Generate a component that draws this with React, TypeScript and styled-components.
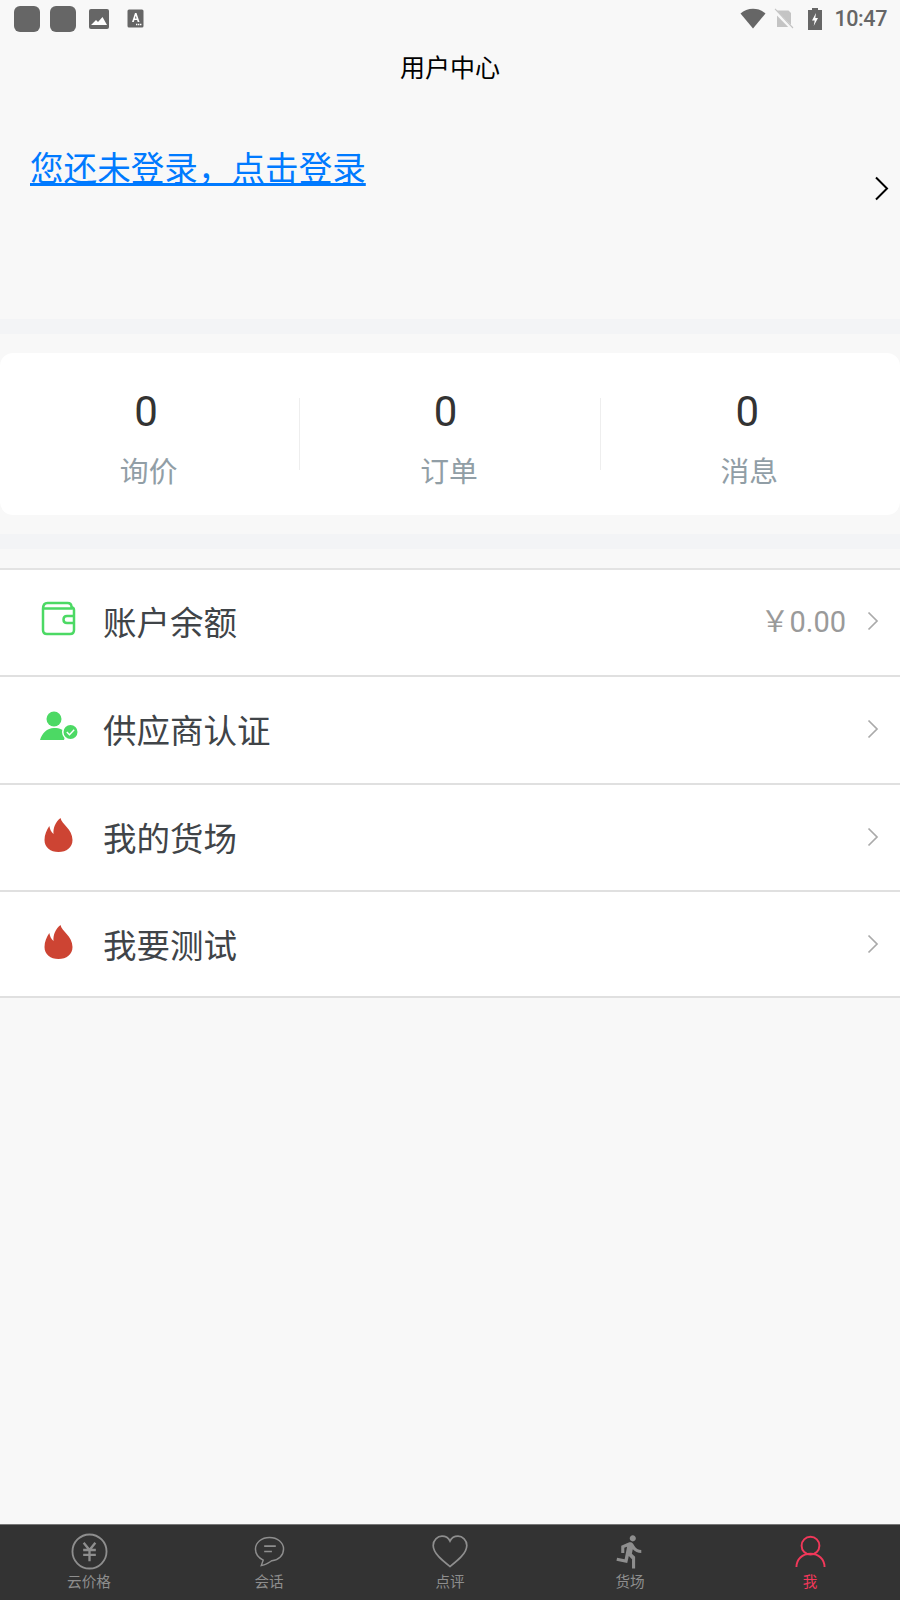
import React from "react";
import styled, { createGlobalStyle } from "styled-components";
import { MdDirectionsRun } from "react-icons/md";

const Global = createGlobalStyle`
  html, body { margin: 0; padding: 0; background: #f8f8f8; }
  * { box-sizing: border-box; }
  body { font-family: Roboto, "Noto Sans CJK SC", sans-serif; }
`;

const Page = styled.div`
  width: 900px;
  height: 1600px;
  display: flex;
  flex-direction: column;
  background: #f8f8f8;
  overflow: hidden;
`;

const StatusBar = styled.div`
  height: 37px;
  flex: none;
  display: flex;
  align-items: center;
  justify-content: space-between;
  padding: 0 13px 0 14px;
`;
const StatusGroup = styled.div`
  display: flex;
  align-items: center;
`;
const AppSquare = styled.div`
  width: 26px;
  height: 26px;
  border-radius: 6px;
  background: #666;
  margin-right: 10px;
`;
const Clock = styled.span`
  font: 500 21.5px/1 Roboto, sans-serif;
  letter-spacing: -0.4px;
  color: #666;
  margin-left: 12px;
`;

const Title = styled.div`
  height: 59px;
  flex: none;
  display: flex;
  align-items: center;
  justify-content: center;
  font: 400 25px/1 "Noto Sans CJK SC", sans-serif;
  color: #000;
`;

const LoginArea = styled.div`
  height: 223px;
  flex: none;
  position: relative;
  padding: 47px 0 0 30px;
`;
const LoginLink = styled.a`
  font: 400 33.6px/47px "Noto Sans CJK SC", sans-serif;
  color: #007aff;
  text-decoration: underline;
  display: block;
`;
const LoginArrow = styled.svg`
  position: absolute;
  left: 874px;
  top: 80px;
`;

const Band = styled.div`
  height: 15px;
  flex: none;
  background: #f3f4f6;
`;

const StatsCard = styled.div`
  flex: none;
  height: 162px;
  margin: 19px 0;
  background: #fff;
  border-radius: 13px;
  display: flex;
  align-items: center;
`;
const Stat = styled.div<{ $divider?: boolean }>`
  flex: 1;
  height: 72px;
  display: flex;
  flex-direction: column;
  align-items: center;
  justify-content: center;
  border-left: ${(p) => (p.$divider ? "1px solid #eeeeee" : "none")};
`;
const StatNumber = styled.div<{ $shift: number }>`
  font: 400 42px/50px Roboto, sans-serif;
  color: #333;
  margin-top: 8px;
  padding-right: ${(p) => p.$shift}px;
`;
const StatLabel = styled.div`
  font: 400 28.8px/40px "Noto Sans CJK SC", sans-serif;
  color: #919ea6;
  margin-top: 13px;
  padding-right: 2px;
`;

const List = styled.div`
  flex: none;
  margin-top: 19px;
  border-top: 2px solid #e3e3e3;
  background: #fff;
`;
const Row = styled.div<{ $height: number }>`
  height: ${(p) => p.$height}px;
  display: flex;
  align-items: center;
  border-bottom: 2px solid #e0e0e0;
  padding: 0 21px 0 40px;
`;
const RowIcon = styled.div`
  width: 63px;
  height: 40px;
  flex: none;
  display: flex;
  align-items: center;
`;
const RowLabel = styled.div<{ $lift: number }>`
  flex: 1;
  font: 400 33.5px/40px "Noto Sans CJK SC", sans-serif;
  color: #404448;
  margin-top: ${(p) => -p.$lift}px;
`;
const RowValue = styled.div`
  font: 400 29px/40px Roboto, "Noto Sans CJK SC", sans-serif;
  color: #9a9a9a;
  margin-right: 21px;
  margin-top: -2px;
`;
const RowChevron = styled.svg<{ $lift: number }>`
  flex: none;
  margin-top: ${(p) => -p.$lift - 1}px;
`;

const Spacer = styled.div`
  flex: 1;
`;

const TabBar = styled.div`
  height: 76px;
  flex: none;
  background: #333;
  border-top: 1px solid #777;
  display: flex;
`;
const Tab = styled.div<{ $active?: boolean; $nudge?: number }>`
  width: 180px;
  flex: none;
  display: flex;
  flex-direction: column;
  align-items: center;
  padding-right: ${(p) => p.$nudge ?? 0}px;
  color: ${(p) => (p.$active ? "#f2385a" : "#8e8e8e")};
`;
const TabIcon = styled.div<{ $lift?: number }>`
  height: 45px;
  padding-bottom: ${(p) => p.$lift ?? 0}px;
  display: flex;
  align-items: flex-end;
  justify-content: center;
`;
const TabLabel = styled.div`
  font: 400 14.6px/20px "Noto Sans CJK SC", sans-serif;
  margin-top: 1px;
`;

const Flame = () => (
  <svg width="29" height="34" viewBox="0 0 28 34" fill="#cd4433" style={{ marginLeft: 4, marginTop: -5 }}>
    <path d="M16 0C17 6 28 11 28 22C28 29.5 22 34 14 34C6 34 0 29.5 0 22C0 17 2 12 4.8 8C5.5 11 6.5 14 9 16C8.5 10 11 4 16 0Z" />
  </svg>
);

const Wallet = () => (
  <svg width="35" height="35" viewBox="0 0 35 35" fill="none" stroke="#4cd964" strokeWidth="2.5" style={{ marginLeft: 1, marginTop: -8 }}>
    <path d="M2 8V29C2 31.5 3.5 33 6 33H29C31.5 33 33 31.5 33 29V9C33 7.5 32 6.5 30.5 6.3" />
    <path d="M2 8C2 4 3.5 2 6.5 2H26.5C29 2 30.5 3.5 30.5 6V7.5H2" />
    <path d="M33 15H26C23.8 15 22.5 16.6 22.5 18.5C22.5 20.4 23.8 22 26 22H33" />
  </svg>
);

const PersonCheck = () => (
  <svg width="40" height="30" viewBox="0 0 40 30" style={{ marginTop: -8 }}>
    <circle cx="14" cy="8" r="7.5" fill="#4cd964" />
    <path d="M0 29C2 22 7 17 14 17C20 17 24 19 26 22L24 29Z" fill="#4cd964" />
    <circle cx="30.5" cy="21" r="8.5" fill="#fff" />
    <circle cx="30.5" cy="21" r="7" fill="#4cd964" />
    <path d="M26.8 21L29.5 23.8L34.2 18.8" fill="none" stroke="#fff" strokeWidth="1.4" />
  </svg>
);

const rows = [
  { label: "账户余额", icon: <Wallet />, value: "￥0.00", height: 107, lift: 3 },
  { label: "供应商认证", icon: <PersonCheck />, height: 108, lift: 2 },
  { label: "我的货场", icon: <Flame />, height: 107, lift: 1 },
  { label: "我要测试", icon: <Flame />, height: 106, lift: 0 },
];

const stats = [
  { n: "0", label: "询价", shift: 7 },
  { n: "0", label: "订单", shift: 9 },
  { n: "0", label: "消息", shift: 6 },
];

export default function App() {
  return (
    <Page>
      <Global />
      <StatusBar>
        <StatusGroup>
          <AppSquare />
          <AppSquare />
          <svg width="22" height="22" viewBox="0 0 22 22" style={{ marginLeft: 2 }}>
            <rect x="1" y="1" width="20" height="20" rx="2" fill="#666" />
            <path d="M3 17L8 12L10 14L14.5 9L19 17Z" fill="#fff" />
          </svg>
          <svg width="17" height="19" viewBox="0 0 17 19" style={{ marginLeft: 17 }}>
            <rect x="0.5" y="0.5" width="16" height="18" rx="1.5" fill="#666" />
            <path d="M5 13L8 4H9.5L12.5 13H10.7L10.1 11H7.4L6.8 13ZM7.9 9.5H9.6L8.75 6.7Z" fill="#fff" />
            <path d="M9 15.5H15" stroke="#fff" strokeWidth="1.3" strokeDasharray="1.4 0.6" />
          </svg>
        </StatusGroup>
        <StatusGroup>
          <svg width="26" height="21" viewBox="0 0 26 21">
            <path d="M0.5 5.5C7 -0.8 19 -0.8 25.5 5.5L13 20.5Z" fill="#666" />
          </svg>
          <svg width="20" height="22" viewBox="0 0 20 22" style={{ marginLeft: 8 }}>
            <path d="M3 2.5H14.5L17 5V19H3Z" fill="#c4c4c4" />
            <path d="M0 2L19 21.5" stroke="#f8f8f8" strokeWidth="3.4" />
            <path d="M1 0.8L19 20" stroke="#c4c4c4" strokeWidth="1.1" />
          </svg>
          <svg width="14" height="22" viewBox="0 0 14 22" style={{ marginLeft: 14 }}>
            <path d="M4 0H10V2H14V22H0V2H4Z" fill="#666" />
            <path d="M8 5L4 12.5H6.7L5.7 18L10 10H7.3Z" fill="#fff" />
          </svg>
          <Clock>10:47</Clock>
        </StatusGroup>
      </StatusBar>
      <Title>用户中心</Title>
      <LoginArea>
        <LoginLink>您还未登录，点击登录</LoginLink>
        <LoginArrow width="16" height="25" viewBox="0 0 16 25" fill="none" stroke="#000" strokeWidth="2">
          <path d="M2 1.5L13 12.5L2 23.5" />
        </LoginArrow>
      </LoginArea>
      <Band />
      <StatsCard>
        {stats.map((s, i) => (
          <Stat key={s.label} $divider={i > 0}>
            <StatNumber $shift={s.shift}>{s.n}</StatNumber>
            <StatLabel>{s.label}</StatLabel>
          </Stat>
        ))}
      </StatsCard>
      <Band />
      <List>
        {rows.map((r) => (
          <Row key={r.label} $height={r.height}>
            <RowIcon>{r.icon}</RowIcon>
            <RowLabel $lift={r.lift}>{r.label}</RowLabel>
            {r.value && <RowValue>{r.value}</RowValue>}
            <RowChevron $lift={r.lift} width="12" height="20" viewBox="0 0 12 20" fill="none" stroke="#aaa" strokeWidth="1.7">
              <path d="M1.5 1.5L10 10L1.5 18.5" />
            </RowChevron>
          </Row>
        ))}
      </List>
      <Spacer />
      <TabBar>
        <Tab $nudge={2}>
          <TabIcon>
            <svg width="37" height="37" viewBox="0 0 38 38" fill="none" stroke="#8e8e8e" strokeWidth="1.9">
              <circle cx="19" cy="19" r="17.5" />
              <path d="M13 10L19 17.5L25 10M12.5 17.5H25.5M12.5 22.5H25.5M19 17.5V29" strokeWidth="2.4" />
            </svg>
          </TabIcon>
          <TabLabel>云价格</TabLabel>
        </Tab>
        <Tab $nudge={2}>
          <TabIcon $lift={3}>
            <svg width="31" height="31" viewBox="0 0 32 32" fill="none" stroke="#8e8e8e" strokeWidth="1.5">
              <path d="M16 1.5C8 1.5 1.5 6.5 1.5 13.5C1.5 19.5 5.5 23 9.5 25L7.5 30.5C12 30 16 27 18.5 25.5C25.5 25 30.5 20 30.5 13.5C30.5 6.5 24 1.5 16 1.5Z" />
              <path d="M10.5 10.5H22.5M10.5 16H18.5" strokeWidth="1.7" />
            </svg>
          </TabIcon>
          <TabLabel>会话</TabLabel>
        </Tab>
        <Tab>
          <TabIcon $lift={2}>
            <svg width="36" height="33" viewBox="0 0 36 33" fill="none" stroke="#8e8e8e" strokeWidth="1.7">
              <path d="M18 31.5C11 26 1.2 18.5 1.2 10.5C1.2 5 5.5 1.2 10 1.2C13.5 1.2 16.5 3 18 6C19.5 3 22.5 1.2 26 1.2C30.5 1.2 34.8 5 34.8 10.5C34.8 18.5 25 26 18 31.5Z" />
            </svg>
          </TabIcon>
          <TabLabel>点评</TabLabel>
        </Tab>
        <Tab>
          <TabIcon>
            <MdDirectionsRun size={37} color="#8e8e8e" />
          </TabIcon>
          <TabLabel>货场</TabLabel>
        </Tab>
        <Tab $active>
          <TabIcon $lift={2}>
            <svg width="31" height="33" viewBox="0 0 32 33" fill="none" stroke="#f2385a" strokeWidth="2">
              <circle cx="16" cy="10.5" r="9.2" />
              <path d="M1.5 32.5C1.5 24.5 7.5 18.8 16 18.8C24.5 18.8 30.5 24.5 30.5 32.5" />
            </svg>
          </TabIcon>
          <TabLabel>我</TabLabel>
        </Tab>
      </TabBar>
    </Page>
  );
}
